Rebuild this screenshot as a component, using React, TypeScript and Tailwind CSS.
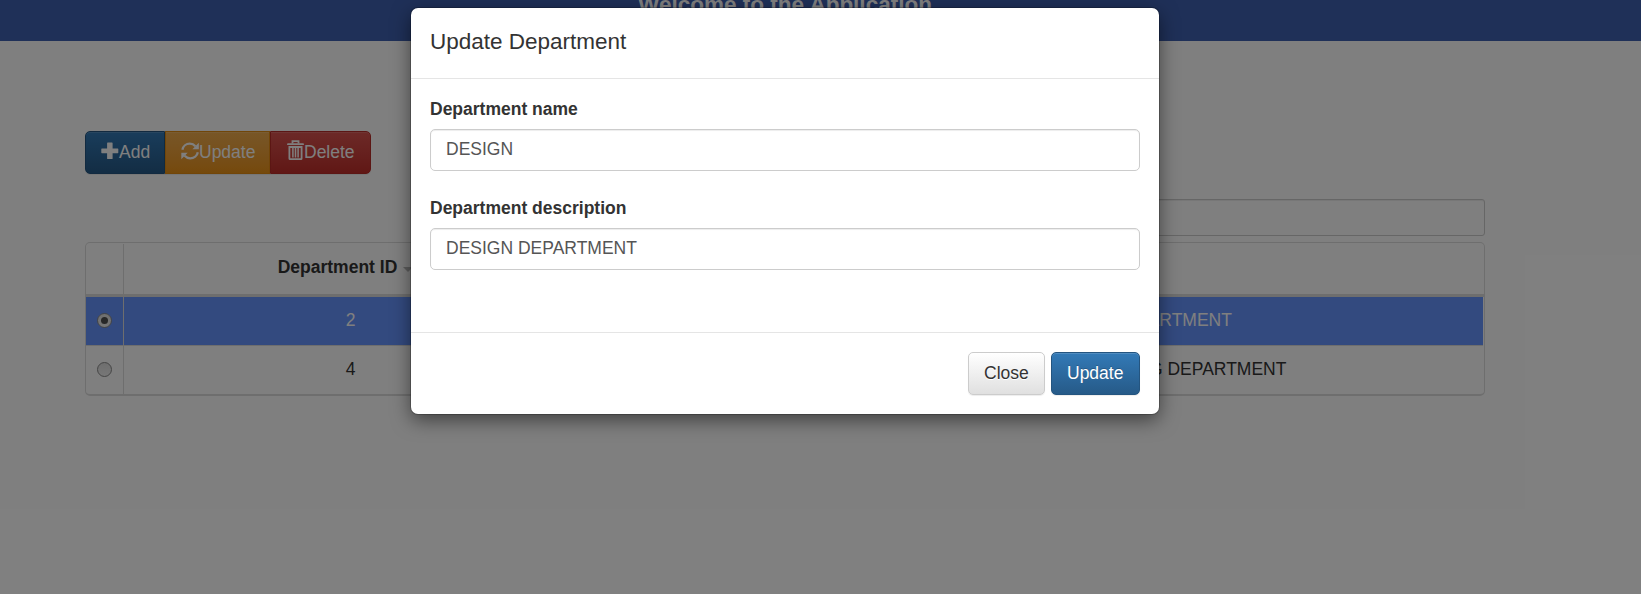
import React from "react";

const buttonBase =
  "flex h-[43px] items-center border px-[15px] text-[17.5px] leading-[25px] shadow-[inset_0_1px_0_rgba(255,255,255,0.15),0_1px_1px_rgba(0,0,0,0.075)]";

const iconClass = "-mt-[4px] shrink-0";

function PlusIcon() {
  return (
    <svg className={iconClass} width="18" height="18" viewBox="0 0 18 18" fill="currentColor">
      <path d="M6.7.6h4.300a.6.6 0 0 1 .6.6v5.200h5.100a.6.6 0 0 1 .6.6v3.600a.6.6 0 0 1-.6.6h-5.100v5.200a.6.6 0 0 1-.6.6H6.700a.6.6 0 0 1-.6-.6v-5.200H.9a.6.6 0 0 1-.6-.6V7a.6.6 0 0 1 .6-.6h5.200V1.200a.6.6 0 0 1 .6-.6z" />
    </svg>
  );
}

function RefreshIcon() {
  return (
    <svg className={iconClass} width="18" height="18" viewBox="0 0 18 18" fill="none" stroke="currentColor" strokeWidth="2.3">
      <path d="M1.400 7.800C2 4.200 5.200 1.700 8.800 1.700c2.200 0 4.200.9 5.600 2.500" />
      <path d="M16.800 10.200c-.6 3.600-3.800 6.100-7.600 6.100-2.200 0-4.200-.9-5.600-2.500" />
      <path d="M17.800.8v6.400h-6.400z" fill="currentColor" stroke="none" />
      <path d="M.3 17.200v-6.400h6.400z" fill="currentColor" stroke="none" />
    </svg>
  );
}

function TrashIcon() {
  return (
    <svg className="-mt-[5px] shrink-0" width="18" height="20" viewBox="0 0 18 20" fill="none" stroke="currentColor">
      <path d="M6.500 3.500V1.200h6v2.300" strokeWidth="1.800" />
      <path d="M1.100 5V3.900q0-.7.8-.7h15.200q.8 0 .8.700V5z" fill="currentColor" stroke="none" />
      <path d="M3.400 7v11.500q0 .6.6.6h11q.6 0 .6-.6V7z" strokeWidth="1.800" />
      <path d="M6.900 7.500v10M9.500 7.500v10M12.100 7.500v10" strokeWidth="1.500" />
    </svg>
  );
}

function Radio({ checked }: { checked: boolean }) {
  return (
    <span className="flex size-[15px] items-center justify-center rounded-full border border-[#8a8a8a] bg-linear-to-b from-[#dedede] to-[#eeeeee]">
      {checked && <span className="size-[7px] rounded-full bg-[#505050]" />}
    </span>
  );
}

const rows = [
  { id: 2, name: "DESIGN", description: "DESIGN DEPARTMENT", selected: true },
  { id: 4, name: "MARKETING", description: "DIGITAL MARKETING DEPARTMENT", selected: false },
];

const columns = "grid grid-cols-[38px_453px_213px_1fr]";

function Field({ label, value }: { label: string; value: string }) {
  return (
    <div className="flex flex-col">
      <label className="mb-[7px] text-[17.5px] leading-[25px] font-bold">{label}</label>
      <input
        className="h-[42px] w-full rounded-[5px] border border-[#ccc] px-[15px] pb-[2px] text-[17.5px] text-[#555] shadow-[inset_0_1px_1px_rgba(0,0,0,0.075)] outline-none"
        defaultValue={value}
      />
    </div>
  );
}

export default function App() {
  return (
    <div className="relative h-[594px] w-full overflow-hidden bg-white font-['Liberation_Sans',Arial,sans-serif] text-[#333]">
      <header className="flex h-[41px] justify-center bg-[#3e60b1] pr-[71px] text-[22.5px] leading-[25px] font-bold text-white">
        <h1 className="-mt-[8px] whitespace-nowrap">Welcome to the Application</h1>
      </header>

      <main className="flex flex-col pt-[90px] pr-[156px] pl-[85px]">
        <div className="flex text-white">
          <button className={buttonBase + " w-[80px] rounded-l-[5px] border-[#245580] bg-linear-to-b from-[#337ab7] to-[#265a88]"}>
            <PlusIcon />
            Add
          </button>
          <button className={buttonBase + " w-[105px] border-[#e38d13] bg-linear-to-b from-[#f0ad4e] to-[#eb9316]"}>
            <RefreshIcon />
            Update
          </button>
          <button className={buttonBase + " w-[101px] rounded-r-[5px] border-[#b92c28] bg-linear-to-b from-[#d9534f] to-[#c12e2a]"}>
            <TrashIcon />
            Delete
          </button>
        </div>
        <input
          aria-label="Search"
          className="mt-[25px] h-[37px] w-[600px] self-end rounded-[3px] border border-[#ccc] shadow-[inset_0_1px_1px_rgba(0,0,0,0.075)]"
        />
        <section className="mt-[6px] flex h-[154px] flex-col overflow-hidden rounded-[5px] border border-b-2 border-[#ddd] text-[17.5px]">
          <div className={columns + " h-[54px] border-b-3 border-[#ddd] pt-[1px]"}>
            <div className="border-r border-[#ddd]" />
            <div className="flex items-center justify-center pb-[3px] font-bold">
              Department ID
              <span className="mt-[3px] ml-[6px] border-x-[5px] border-t-[5px] border-x-transparent border-t-[#bbb]" />
              <span className="w-[10px]" />
            </div>
          </div>
          {rows.map((row) => (
            <div
              key={row.id}
              className={
                columns +
                " leading-[25px] " +
                (row.selected ? "mr-[1px] h-[49px] border-b border-[#ddd] bg-[#6694ff] text-white" : "h-[48px]")
              }
            >
              <div className="flex items-center justify-center border-r border-[#ddd] pb-[2px]">
                <Radio checked={row.selected} />
              </div>
              <div className="flex items-center justify-center pb-[2px]">{row.id}</div>
              <div className="flex items-center justify-center pb-[2px]">{row.name}</div>
              <div className="flex items-center justify-center pb-[2px]">{row.description}</div>
            </div>
          ))}
        </section>
      </main>

      <div className="absolute inset-0 flex items-start justify-center bg-black/50 pt-[8px] pr-[71px]">
        <div
          role="dialog"
          className="flex h-[406px] w-[748px] flex-col rounded-[7px] bg-white shadow-[0_6px_19px_rgba(0,0,0,0.5),0_0_0_1px_rgba(0,0,0,0.2)]"
        >
          <div className="h-[71px] border-b border-[#e5e5e5] px-[19px] pt-[18px] text-[22.5px] leading-[32px]">
            Update Department
          </div>
          <div className="flex h-[253px] flex-col gap-[25px] px-[19px] pt-[18px]">
            <Field label="Department name" value="DESIGN" />
            <Field label="Department description" value="DESIGN DEPARTMENT" />
          </div>
          <div className="flex flex-1 justify-end gap-[6px] border-t border-[#e5e5e5] px-[19px] pt-[19px]">
            <button className={buttonBase + " w-[77px] rounded-[5px] border-[#ccc] bg-linear-to-b from-white to-[#e0e0e0] [text-shadow:0_1px_0_#fff]"}>
              Close
            </button>
            <button className={buttonBase + " w-[89px] rounded-[5px] border-[#245580] bg-linear-to-b from-[#337ab7] to-[#265a88] text-white [text-shadow:0_-1px_0_rgba(0,0,0,0.2)]"}>
              Update
            </button>
          </div>
        </div>
      </div>
    </div>
  );
}
